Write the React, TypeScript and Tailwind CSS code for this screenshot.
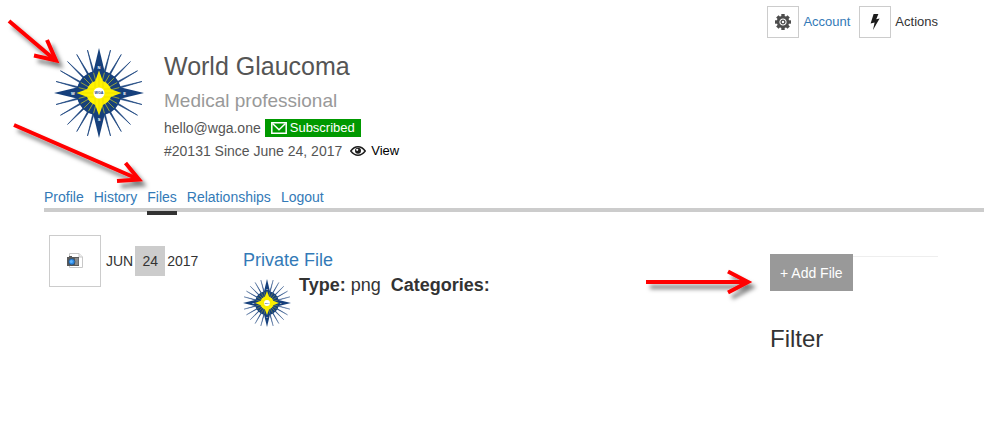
import type { ReactNode } from 'react';

const NAV = ['Profile', 'History', 'Files', 'Relationships', 'Logout'];
const ACTIVE_TAB = 'Files';

const RAY_ANGLES = Array.from({ length: 24 }, (_, i) => i * 15).filter((a) => a % 90 !== 0);
const POINTS = [0, 90, 180, 270];

function Compass({ className }: { className: string }) {
  return (
    <svg viewBox="-45 -45 90 90" className={className} role="img" aria-label="WGA logo">
      <g fill="#16407c">
        {RAY_ANGLES.map((a) => (
          <path key={a} d="M0 -44.5 L0.7 -20 H-0.7 Z" stroke="#16407c" strokeWidth="0.6" transform={`rotate(${a})`} />
        ))}
        <circle r="22.5" />
        {POINTS.map((a) => (
          <path key={a} d="M0 -45 L6.5 -18 H-6.5 Z" transform={`rotate(${a})`} />
        ))}
      </g>
      <g stroke="#b9bf2a" strokeWidth="0.7">
        {RAY_ANGLES.map((a) => (
          <path key={a} d="M0 -21 V-10" transform={`rotate(${a})`} />
        ))}
      </g>
      <g fill="#fff200">
        <circle r="12.5" />
        {POINTS.map((a) => (
          <path key={a} d="M0 -22.5 L4.5 -10 H-4.5 Z" transform={`rotate(${a})`} />
        ))}
      </g>
      <g stroke="#c4b800" strokeWidth="0.3">
        {POINTS.map((a) => (
          <path key={a} d="M0 -20 V-5 M-4 -12 V-5 M4 -12 V-5" transform={`rotate(${a})`} />
        ))}
      </g>
      <circle r="5.5" fill="#fff" />
      <g fontFamily="Liberation Sans, sans-serif" fontWeight="bold" textAnchor="middle">
        <text y="1.3" fontSize="3.6" fill="#16407c">WGA</text>
        <g fontSize="4" fill="#fff">
          <text y="-24.5">N</text>
          <text y="27.5">S</text>
          <text x="25.5" y="1.5">E</text>
          <text x="-26" y="1.5">W</text>
        </g>
      </g>
    </svg>
  );
}

function GearIcon() {
  return (
    <svg viewBox="-8 -8 16 16" className="size-4" fill="none" stroke="#4d4d4d">
      <circle r="4.9" strokeWidth="2.6" />
      <circle r="1.9" strokeWidth="1.4" />
      {[0, 45, 90, 135, 180, 225, 270, 315].map((a) => (
        <path key={a} d="M0 -8 V-5.4" strokeWidth="3.4" transform={`rotate(${a})`} />
      ))}
    </svg>
  );
}

function BoltIcon() {
  return (
    <svg viewBox="0 0 10 16" className="h-4 w-[10px]" fill="#1c1c1c">
      <path d="M3.6 0 H8.4 L6.2 5.2 L9.6 4.4 L3 16 L4.6 8.6 L0.6 9.6 Z" />
    </svg>
  );
}

function MailIcon() {
  return (
    <svg viewBox="0 0 16 12" className="h-3 w-4" fill="none" stroke="#fff" strokeWidth="1.5">
      <path d="M0.8 0.8 H15.2 V11.2 H0.8 Z" />
      <path d="M1.5 1.5 L8 7.8 L14.5 1.5" />
    </svg>
  );
}

function EyeIcon() {
  return (
    <svg viewBox="0 0 16 10" className="h-[10px] w-4" fill="none" stroke="#1c1c1c">
      <path d="M0.8 5 Q4 0.8 8 0.8 T15.2 5 Q12 9.2 8 9.2 T0.8 5 Z" strokeWidth="1.5" />
      <circle cx="8" cy="4.8" r="3" fill="#1c1c1c" stroke="none" />
      <circle cx="7.2" cy="3.8" r="1.1" fill="#fff" stroke="none" />
    </svg>
  );
}

function PhotoIcon() {
  return (
    <svg viewBox="0 0 16 16" className="size-4">
      <path d="M2.5 0.5 H12 L15.5 4 V14.5 H2.5 Z" fill="#fff" stroke="#c8c8c8" />
      <path d="M12 0.5 V4 H15.5" fill="#eee" stroke="#c8c8c8" />
      <path d="M0 4 H2 V3 H5 V4 H12 V13 H0 Z" fill="#5a5a5a" />
      <path d="M8.5 5 H9.5 V12 H8.5 Z M10.5 5 H11.2 V12 H10.5 Z" fill="#bbb" />
      <circle cx="4.8" cy="8.8" r="3.2" fill="#2a86e0" stroke="#333" strokeWidth="0.5" />
      <circle cx="4.4" cy="8.4" r="1.5" fill="#5db4ff" />
    </svg>
  );
}

function ToolButton({ label, className, children }: { label: string; className: string; children: ReactNode }) {
  return (
    <button type="button" className={`flex items-center gap-1 ${className}`}>
      <span className="flex size-8 items-center justify-center border border-[#ccc]">{children}</span>
      {label}
    </button>
  );
}

// Red pointers drawn over the page
function Pointers() {
  return (
    <svg
      className="pointer-events-none absolute top-0 left-0"
      width="994"
      height="440"
      fill="none"
      stroke="#f00"
      strokeWidth="4"
      aria-hidden="true"
    >
      <defs>
        <filter id="shade" filterUnits="userSpaceOnUse" x="0" y="0" width="994" height="440">
          <feDropShadow dx="4" dy="5" stdDeviation="2" floodColor="#000" floodOpacity="0.5" />
        </filter>
      </defs>
      <g filter="url(#shade)">
        <path d="M9 21 L55 60" />
        <path d="M47 40 L56 60.500 L34 55.500" />
        <path d="M14 125 L138 179" />
        <path d="M125.500 163 L139 179.500 L117 181" />
        <path d="M646 282 H746" />
        <path d="M728 271.500 L748 282 L728 292.500" />
      </g>
    </svg>
  );
}

export default function App() {
  return (
    <div className="relative pb-20 font-['Liberation_Sans',Arial,sans-serif] text-sm text-[#333]">
      <header className="flex items-start justify-between pr-14 pl-[54px]">
        <div className="flex gap-5 pt-12">
          <Compass className="size-[90px]" />
          <div className="text-[#555]">
            <h1 className="text-[25px] leading-9">World Glaucoma</h1>
            <h2 className="text-[19px] leading-[34px] text-[#999]">Medical professional</h2>
            <p className="flex items-center gap-1 leading-5">
              hello@wga.one
              <span className="flex h-[18px] items-center gap-[3px] bg-[#090] px-[6px] text-[13px] text-white">
                <MailIcon />
                Subscribed
              </span>
            </p>
            <p className="flex items-center gap-2 leading-[26px]">
              #20131 Since June 24, 2017
              <a href="#view" className="flex items-center gap-[5px] text-[13px] text-black">
                <EyeIcon />
                View
              </a>
            </p>
          </div>
        </div>
        <div className="flex gap-[9px] pt-[6px] text-[13px]">
          <ToolButton label="Account" className="text-[#337ab7]">
            <GearIcon />
          </ToolButton>
          <ToolButton label="Actions" className="text-[#333]">
            <BoltIcon />
          </ToolButton>
        </div>
      </header>

      <nav className="mt-[23px] mr-[10px] ml-11 flex gap-[10px] border-b-4 border-[#ccc] leading-[21px] text-[#337ab7]">
        {NAV.map((item) => (
          <a key={item} href={`#${item.toLowerCase()}`} className="relative">
            {item}
            {item === ACTIVE_TAB && <span className="absolute inset-x-0 -bottom-[7px] h-1 bg-[#333]" />}
          </a>
        ))}
      </nav>

      <main className="mt-[23px] grid grid-cols-[194px_1fr_168px] pr-14 pl-[49px]">
        <div className="flex items-center gap-[5px] self-start">
          <span className="flex size-[52px] items-center justify-center border border-[#ccc]">
            <PhotoIcon />
          </span>
          <time dateTime="2017-06-24" className="flex items-center gap-[2px]">
            JUN
            <span className="flex size-[30px] items-center justify-center bg-[#ccc]">24</span>
            2017
          </time>
        </div>

        <article className="pt-[13px] text-lg leading-[25px]">
          <h3>
            <a href="#private-file" className="text-[#337ab7]">Private File</a>
          </h3>
          <div className="flex gap-2">
            <Compass className="mt-[6px] size-12" />
            <p>
              <strong>Type:</strong> png &nbsp;<strong>Categories:</strong>
            </p>
          </div>
        </article>

        <aside className="pt-[19px]">
          <div className="flex items-start">
            <button type="button" className="h-[37px] bg-[#999] px-[10px] text-white">+ Add File</button>
            <hr className="mt-[2px] flex-1 border-[#eee]" />
          </div>
          <h2 className="mt-8 text-2xl">Filter</h2>
        </aside>
      </main>

      <Pointers />
    </div>
  );
}
